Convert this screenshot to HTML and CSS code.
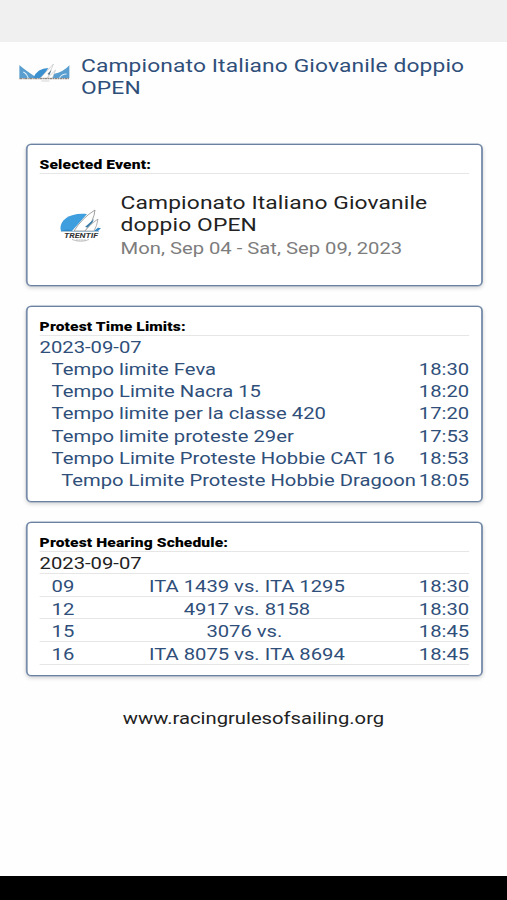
FILE: index.html
```html
<!DOCTYPE html>
<html lang="it">
<head>
    <meta charset="UTF-8">
    <meta name="viewport" content="width=device-width, initial-scale=1.0">
    <title>Campionato Italiano Giovanile doppio OPEN</title>
    <link rel="stylesheet" href="styles.css">
</head>
<body>
    <div class="screen">
        <div class="status-bar"></div>

        <header class="header">
            <svg class="header-logo" viewBox="0 0 50 20" preserveAspectRatio="none">
                <path d="M0 2 Q7 8 18 15 H0Z M50 2 Q44 9 34 11 L31 15 H50Z" fill="#5a9ecf"/>
                <path d="M14 15 Q18 5 29 5 L22 15Z" fill="#3b91d0"/>
                <path d="M4 9 Q7 10 9 15 M40 15 Q42 11 47 11" stroke="#d9edf8" stroke-width="1" fill="none"/>
                <path d="M21 15 L34 1 L28 15Z M28 15 L36 7 L33 15Z" fill="#fff" stroke="#bbb" stroke-width=".6"/>
                <path d="M28 11 L32 7 L30 12Z" fill="#51758e"/>
                <path d="M0 15.6 H50" stroke="#8d8782" stroke-width="1.4" stroke-dasharray="3 .5 1 .5"/>
                <path d="M22 18 H30" stroke="#ccc" stroke-width=".8"/>
            </svg>
            <h1>Campionato Italiano Giovanile doppio OPEN</h1>
        </header>

        <main class="content">
            <section class="card card-event">
                <h2>Selected Event:</h2>
                <div class="event">
                    <svg class="event-logo" viewBox="0 0 42 34" preserveAspectRatio="none">
                        <path d="M1 22 C-2 13 8 3 27 5 L12 22Z" fill="#3f9ede"/>
                        <path d="M1 22 Q8 19 13 22Z" fill="#3288c5"/>
                        <path d="M14 22 Q22 9 35 1 Q34 12 25 22Z" fill="#fff" stroke="#888" stroke-width=".8"/>
                        <path d="M25 18 L34 10 L30 19Z" fill="#397da9"/>
                        <path d="M25 22 Q31 14 38 10 Q37 17 34 22Z" fill="#fff" stroke="#999" stroke-width=".8"/>
                        <path d="M34 22 L40 17 L38 19 H41 L38 22Z" fill="#3288c5"/>
                        <path d="M1 22.5 H39" stroke="#8fb4cc" stroke-width=".8"/>
                        <text x="4" y="28.5" class="logo-text" textLength="34" lengthAdjust="spacingAndGlyphs">TRENTIF</text>
                        <path d="M12 30.5 Q21 34 29 30.5" stroke="#bbb" stroke-width=".9" fill="none"/>
                        <path d="M16 31 H26" stroke="#aaa" stroke-width=".8" stroke-dasharray="2 .6"/>
                    </svg>
                    <div class="event-info">
                        <div class="event-name">Campionato Italiano Giovanile doppio OPEN</div>
                        <div class="event-dates">Mon, Sep 04 - Sat, Sep 09, 2023</div>
                    </div>
                </div>
            </section>

            <section class="card card-limits">
                <h2>Protest Time Limits:</h2>
                <div class="date">2023-09-07</div>
                <ul class="limits">
                    <li><span>Tempo limite Feva</span><time>18:30</time></li>
                    <li><span>Tempo Limite Nacra 15</span><time>18:20</time></li>
                    <li><span>Tempo limite per la classe 420</span><time>17:20</time></li>
                    <li><span>Tempo limite proteste 29er</span><time>17:53</time></li>
                    <li><span>Tempo Limite Proteste Hobbie CAT 16</span><time>18:53</time></li>
                    <li class="long"><span>Tempo Limite Proteste Hobbie Dragoon</span><time>18:05</time></li>
                </ul>
            </section>

            <section class="card card-hearings">
                <h2>Protest Hearing Schedule:</h2>
                <div class="date">2023-09-07</div>
                <ul class="hearings">
                    <li><span>09</span><span class="parties">ITA 1439 vs. ITA 1295</span><time>18:30</time></li>
                    <li><span>12</span><span class="parties">4917 vs. 8158</span><time>18:30</time></li>
                    <li><span>15</span><span class="parties">3076 vs.&nbsp;</span><time>18:45</time></li>
                    <li><span>16</span><span class="parties">ITA 8075 vs. ITA 8694</span><time>18:45</time></li>
                </ul>
            </section>
        </main>

        <footer class="site">www.racingrulesofsailing.org</footer>
        <div class="nav-bar"></div>
    </div>
</body>
</html>
```

FILE: styles.css
```css
* {
    box-sizing: border-box;
}
body {
    margin: 0;
    overflow: hidden;
    background-color: #fefefe;
}
/* wide type: the whole screen is laid out narrow and stretched */
.screen {
    display: flex;
    flex-direction: column;
    width: 422.5px;
    height: 900px;
    transform: scaleX(1.2);
    transform-origin: 0 0;
    font-family: Roboto, sans-serif;
    font-size: 16.85px;
    line-height: 22.3px;
    color: #2f4f7a;
}
.status-bar {
    height: 42px;
    background-color: #f0f0f0;
}
.header {
    display: flex;
    height: 101.5px;
    padding: 13px 16px 0 15.5px;
}
.header-logo {
    width: 42px;
    height: 20px;
    margin: 8px 10px 0 0;
}
h1 {
    flex: 1;
    margin: 0;
    font-size: 19px;
    font-weight: 400;
    line-height: 22px;
    letter-spacing: 0.1px;
}
.content {
    display: flex;
    flex-direction: column;
    gap: 20px;
    padding: 0 20.5px 0 21.5px;
}
.card {
    padding: 12px 10px 0 10.5px;
    border: 1px solid #6a81a2;
    border-radius: 4px / 5px;
    background-color: #fff;
    box-shadow: 0 0 0 0.5px #8da0ba, 0 2px 4px rgba(0, 0, 0, 0.18);
}
.card-event {
    height: 142px;
}
.card-limits {
    height: 196px;
}
.card-hearings {
    height: 154px;
}
h2 {
    height: 17px;
    margin: 0;
    border-bottom: 1px solid #e6e6e6;
    font-size: 13px;
    font-weight: 900;
    line-height: 15px;
    letter-spacing: 0.1px;
    color: #000;
}
.event {
    display: flex;
    padding: 18px 0 0 16.5px;
}
.event-logo {
    flex-shrink: 0;
    width: 35px;
    height: 34px;
    margin: 17px 16px 0 0;
}
.event-info {
    flex: 1;
}
.logo-text {
    font-size: 7px;
    font-weight: 700;
    font-style: italic;
    fill: #333;
}
.event-name {
    font-size: 19px;
    line-height: 22px;
    letter-spacing: 0.1px;
    color: #222;
}
.event-dates {
    line-height: 24.5px;
    color: #7d7d7d;
}
ul {
    margin: 0;
    padding: 0;
    list-style: none;
}
.limits li {
    display: flex;
    justify-content: space-between;
    padding-left: 10px;
    white-space: nowrap;
}
.limits .long {
    padding-left: 18px;
}
.hearings li {
    display: grid;
    grid-template-columns: 37.5px 1fr 60px;
    height: 22.7px;
    padding-left: 10px;
    border-bottom: 1px solid #e6e6e6;
    line-height: 25px;
}
.card-hearings .date {
    height: 22.5px;
    border-bottom: 1px solid #e6e6e6;
    line-height: 23.4px;
    color: #222;
}
.parties {
    text-align: center;
}
.hearings time {
    text-align: right;
}
.site {
    padding-top: 31px;
    text-align: center;
    color: #222;
}
.nav-bar {
    height: 24px;
    margin-top: auto;
    background-color: #000;
}
```
